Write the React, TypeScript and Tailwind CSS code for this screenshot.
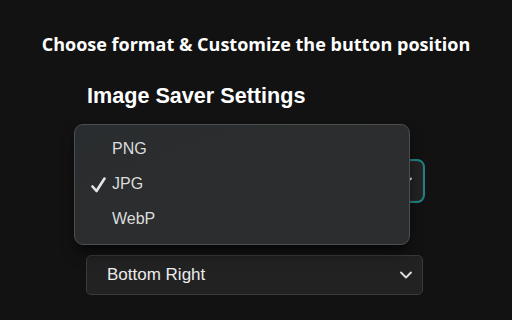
import { ChevronDown } from "lucide-react";

const formats = ["PNG", "JPG", "WebP"];

function App() {
  const selected = "JPG";

  return (
    <div className="w-[512px] h-[320px] bg-[#121212] overflow-hidden" style={{ fontFamily: '"Liberation Sans", Arial, sans-serif' }}>
      <h1 className="pt-[32px] text-center text-[18px] leading-6 font-bold text-white" style={{ fontFamily: '"Open Sans", sans-serif' }}>
        Choose format &amp; Customize the button position
      </h1>

      <div className="relative ml-[86px] w-[337px] mt-[26px]">
        <h2 className="pl-px text-[21.6px] leading-7 font-bold text-white">Image Saver Settings</h2>

        {/* format select (focused, menu open over it) */}
        <div className="mt-[51px] h-[40px] flex items-center justify-end pr-[6px] rounded-[6px] bg-[#222222] border border-[#3a1f22] outline-2 outline-[#1b8383]">
          <ChevronDown className="w-5 h-5 text-[#e0e0e0]" strokeWidth={2.2} />
        </div>

        {/* position select */}
        <div className="mt-[54px] h-[40px] flex items-center justify-between pl-[20px] pr-[6px] rounded-[5px] bg-[#222222] border border-[#3a3a3a]">
          <span className="text-[17px] text-[#ececec]">Bottom Right</span>
          <ChevronDown className="w-5 h-5 text-[#e0e0e0]" strokeWidth={2.2} />
        </div>

        <div className="absolute left-[-12px] top-[42px] w-[336px] h-[121px] pt-[6px] rounded-[9px] border border-[#4c4d4e] bg-gradient-to-br from-[#2a2d2f] to-[#2c2d2e] shadow-lg shadow-black/50">
          {formats.map((f) => (
            <div key={f} className="h-[35px] flex items-center">
              <div className="w-[37px] flex justify-end pr-[6px]">
                {f === selected && (
                  <svg width="15" height="16" viewBox="0 0 15 16" fill="none" className="mt-[2px]">
                    <path d="M1.5 9.5 L5.5 14 L13.5 1.5" stroke="#e6e6e6" strokeWidth="2.6" strokeLinecap="round" strokeLinejoin="round" />
                  </svg>
                )}
              </div>
              <span className="text-[16px] text-[#dcdcdc]">{f}</span>
            </div>
          ))}
        </div>
      </div>
    </div>
  );
}

export default App;
